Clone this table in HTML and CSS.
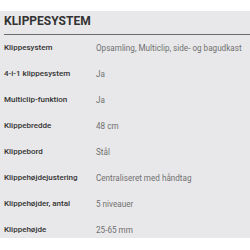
FILE: index.html
```html
<!DOCTYPE html>
<html>
<head>
<meta charset="utf-8">
<link rel="stylesheet" href="styles.css">
</head>
<body>
<div class="panel">
  <h2 class="title">KLIPPESYSTEM</h2>
  <div class="specs">
    <div class="label">Klippesystem</div><div class="value">Opsamling, Multiclip, side- og bagudkast</div>
    <div class="label">4-i-1 klippesystem</div><div class="value">Ja</div>
    <div class="label">Multiclip-funktion</div><div class="value">Ja</div>
    <div class="label">Klippebredde</div><div class="value">48 cm</div>
    <div class="label">Klippebord</div><div class="value">Stål</div>
    <div class="label">Klippehøjdejustering</div><div class="value">Centraliseret med håndtag</div>
    <div class="label">Klippehøjder, antal</div><div class="value">5 niveauer</div>
    <div class="label">Klippehøjde</div><div class="value">25-65 mm</div>
  </div>
</div>
</body>
</html>
```
FILE: styles.css
```css
html, body {
  margin: 0;
  padding: 0;
  background: #ffffff;
}
body {
  padding-top: 11px;
  font-family: Roboto, "Liberation Sans", sans-serif;
}
.panel {
  background: #e8e8ea;
  padding: 3px 0 3px 4px;
}
.title {
  margin: 0;
  font-size: 12px;
  line-height: 14px;
  font-weight: 700;
  color: #333333;
  padding-bottom: 6px;
  border-bottom: 1px solid #6b6b6b;
}
.specs {
  display: grid;
  grid-template-columns: 92px 1fr;
  row-gap: 16px;
  padding-top: 8px;
  font-size: 8px;
  line-height: 10px;
}
.label {
  font-weight: 500;
  color: #333333;
}
.value {
  font-size: 8.15px;
  color: #707070;
  white-space: nowrap;
}
```
